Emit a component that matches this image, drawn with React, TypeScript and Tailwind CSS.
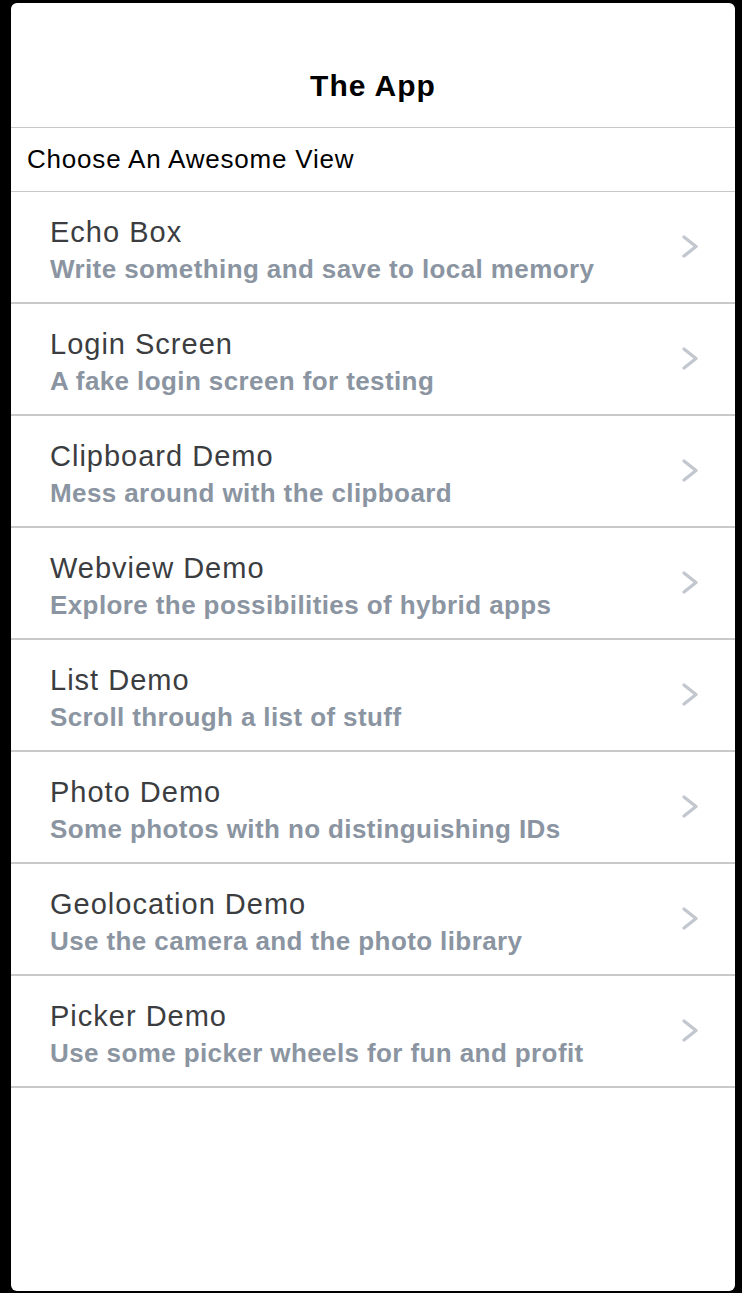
import React from 'react';

const items = [
  { title: 'Echo Box', subtitle: 'Write something and save to local memory' },
  { title: 'Login Screen', subtitle: 'A fake login screen for testing' },
  { title: 'Clipboard Demo', subtitle: 'Mess around with the clipboard' },
  { title: 'Webview Demo', subtitle: 'Explore the possibilities of hybrid apps' },
  { title: 'List Demo', subtitle: 'Scroll through a list of stuff' },
  { title: 'Photo Demo', subtitle: 'Some photos with no distinguishing IDs' },
  { title: 'Geolocation Demo', subtitle: 'Use the camera and the photo library' },
  { title: 'Picker Demo', subtitle: 'Use some picker wheels for fun and profit' },
];

const Chevron: React.FC = () => (
  <svg width="19" height="25" viewBox="0 0 19 25" fill="none" className="shrink-0">
    <path d="M3 3 L15 12.5 L3 22" stroke="#c3c8d0" strokeWidth="3.4" strokeLinecap="round" strokeLinejoin="round" />
  </svg>
);

const App: React.FC = () => {
  return (
    <div className="w-[742px] h-[1293px] bg-black pt-[3px] pl-[11px] pr-[7px] pb-[2px] font-['Liberation_Sans',Arial,sans-serif]">
      <div className="h-full bg-white rounded-[6px] flex flex-col overflow-hidden">
        <header className="h-[125px] shrink-0 border-b border-[#c8c8ca] pt-[65px] text-center">
          <h1 className="text-[30px] leading-[36px] font-bold tracking-[1px] text-black">The App</h1>
        </header>
        <div className="h-[64px] shrink-0 border-b border-[#c8c8ca] pt-[15px] pl-[16px]">
          <p className="text-[26px] leading-[32px] tracking-[0.8px] text-black">Choose An Awesome View</p>
        </div>
        <ul>
          {items.map((item) => (
            <li
              key={item.title}
              className="h-[112px] border-b-2 border-[#c9c9cb] flex items-start justify-between pl-[39px] pr-[35px]"
            >
              <div className="pt-[26px]">
                <div className="text-[29px] leading-[28px] tracking-[1px] text-[#3b3d41]">{item.title}</div>
                <div className="mt-[10px] text-[26px] leading-[26px] font-bold tracking-[0.4px] text-[#8b95a2]">{item.subtitle}</div>
              </div>
              <div className="pt-[42px]">
                <Chevron />
              </div>
            </li>
          ))}
        </ul>
      </div>
    </div>
  );
};

export default App;
